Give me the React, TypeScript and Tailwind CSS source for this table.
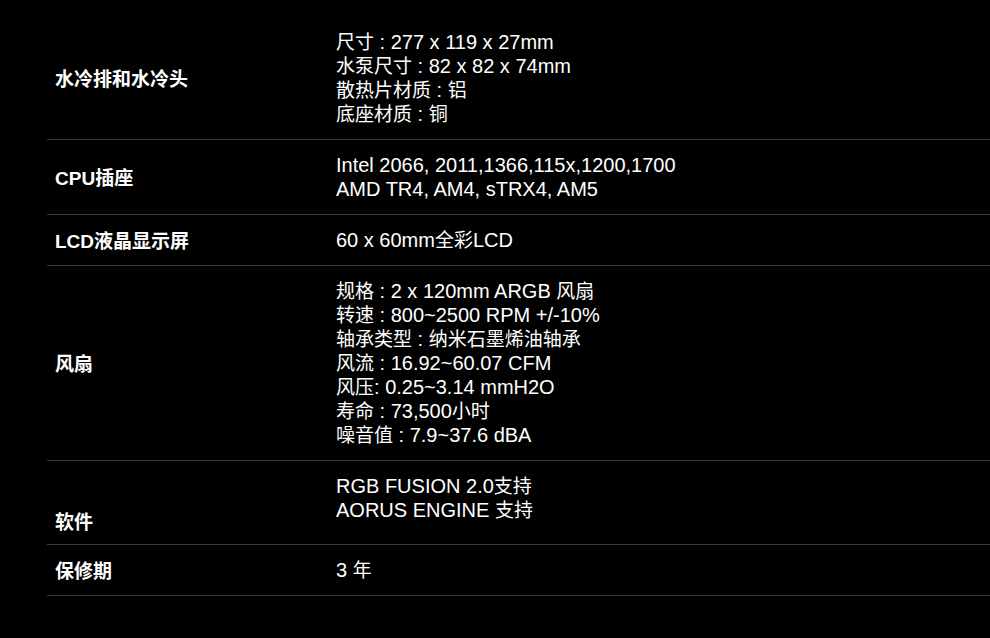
import React from "react";

const rows: { label: string; lines: string[]; kind?: string }[] = [
  {
    label: "水冷排和水冷头",
    lines: ["尺寸 : 277 x 119 x 27mm", "水泵尺寸 : 82 x 82 x 74mm", "散热片材质 : 铝", "底座材质 : 铜"],
  },
  { label: "CPU插座", lines: ["Intel 2066, 2011,1366,115x,1200,1700", "AMD TR4, AM4, sTRX4, AM5"] },
  { label: "LCD液晶显示屏", lines: ["60 x 60mm全彩LCD"] },
  {
    label: "风扇",
    lines: [
      "规格 : 2 x 120mm ARGB 风扇",
      "转速 : 800~2500 RPM +/-10%",
      "轴承类型 : 纳米石墨烯油轴承",
      "风流 : 16.92~60.07 CFM",
      "风压: 0.25~3.14 mmH2O",
      "寿命 : 73,500小时",
      "噪音值 : 7.9~37.6 dBA",
    ],
  },
  { label: "软件", lines: ["RGB FUSION 2.0支持", "AORUS ENGINE 支持"], kind: "bottom" },
  { label: "保修期", lines: ["3 年"] },
];

function Mixed({ text, cjkClass }: { text: string; cjkClass: string }) {
  const parts = text.split(/([\u3000-\u9fff\uff00-\uffef]+)/).filter((p) => p.length > 0);
  return (
    <>
      {parts.map((p, i) =>
        /[\u3000-\u9fff\uff00-\uffef]/.test(p) ? (
          <span key={i} className={cjkClass}>
            {p}
          </span>
        ) : (
          <span key={i}>{p}</span>
        )
      )}
    </>
  );
}

export default function App() {
  return (
    <div
      className="w-[990px] h-[638px] bg-black text-white overflow-hidden pt-[17px]"
      style={{ fontFamily: '"Liberation Sans", "Noto Sans CJK SC", sans-serif' }}
    >
      <div className="ml-[47px] w-[960px]">
        {rows.map((r) => (
          <div key={r.label} className="flex border-b border-[#3a3a3a]">
            <div
              className={
                "w-[281px] pl-2 flex font-bold text-[19px] leading-6 " +
                (r.kind === "bottom" ? "items-end pb-[9px]" : "items-center pt-1")
              }
            >
              <div className="h-6 whitespace-pre">
                <Mixed text={r.label} cjkClass="text-[19px] leading-none" />
              </div>
            </div>
            <div
              className={
                "flex-1 pl-2 text-[20px] leading-6 " +
                (r.kind === "bottom" ? "pt-[13px] pb-[22px]" : "py-[13px]")
              }
            >
              {r.lines.map((l) => (
                <div key={l} className="h-6 whitespace-pre">
                  <Mixed text={l} cjkClass="text-[19px] leading-none" />
                </div>
              ))}
            </div>
          </div>
        ))}
      </div>
    </div>
  );
}
